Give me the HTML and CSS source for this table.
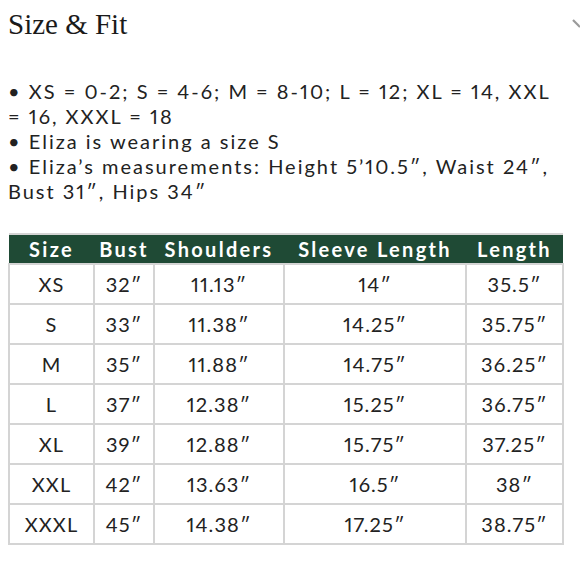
FILE: index.html
```html
<!DOCTYPE html>
<html>
<head>
<meta charset="utf-8">
<link rel="stylesheet" href="styles.css">
</head>
<body>
<div class="page">
  <div class="top">
    <h1 class="title">Size &amp; Fit</h1>
    <svg class="chev" width="8" height="10" viewBox="0 0 8 10"><path d="M1 1 L8 8" stroke="#9a9a9a" stroke-width="2.2" fill="none"/></svg>
  </div>
  <div class="notes">
    <p>• XS = 0-2; S = 4-6; M = 8-10; L = 12; XL = 14, XXL = 16, XXXL = 18</p>
    <p>• Eliza is wearing a size S</p>
    <p>• Eliza’s measurements: Height 5’10.5″, Waist 24″, Bust 31″, Hips 34″</p>
  </div>
  <table class="chart">
    <colgroup>
      <col class="c1"><col class="c2"><col class="c3"><col class="c4"><col class="c5">
    </colgroup>
    <thead>
      <tr><th>Size</th><th>Bust</th><th>Shoulders</th><th>Sleeve Length</th><th>Length</th></tr>
    </thead>
    <tbody>
      <tr><td>XS</td><td>32″</td><td>11.13″</td><td>14″</td><td>35.5″</td></tr>
      <tr><td>S</td><td>33″</td><td>11.38″</td><td>14.25″</td><td>35.75″</td></tr>
      <tr><td>M</td><td>35″</td><td>11.88″</td><td>14.75″</td><td>36.25″</td></tr>
      <tr><td>L</td><td>37″</td><td>12.38″</td><td>15.25″</td><td>36.75″</td></tr>
      <tr><td>XL</td><td>39″</td><td>12.88″</td><td>15.75″</td><td>37.25″</td></tr>
      <tr><td>XXL</td><td>42″</td><td>13.63″</td><td>16.5″</td><td>38″</td></tr>
      <tr><td>XXXL</td><td>45″</td><td>14.38″</td><td>17.25″</td><td>38.75″</td></tr>
    </tbody>
  </table>
</div>
</body>
</html>
```
FILE: styles.css
```css
html, body {
  margin: 0;
  padding: 0;
  background: #fff;
}
.page {
  padding: 0 0 0 8px;
  width: 572px;
  box-sizing: border-box;
  font-family: "Lato", "Liberation Sans", sans-serif;
  font-variant-numeric: proportional-nums;
  color: #1c1c1c;
}
.top {
  display: flex;
  justify-content: space-between;
  align-items: flex-start;
  height: 79px;
}
.title {
  margin: 0;
  padding-top: 8px;
  font-family: "Liberation Serif", serif;
  font-weight: normal;
  font-size: 29px;
  line-height: 33px;
  color: #1a1a1a;
}
.chev {
  margin-top: 19px;
  margin-right: -8px;
}
.notes {
  width: 552px;
  font-size: 20px;
  line-height: 25px;
  letter-spacing: 2px;
  color: #222;
}
.notes p {
  margin: 0;
}
.chart {
  margin-top: 29px;
  border-collapse: collapse;
  table-layout: fixed;
  width: 554px;
  font-size: 20px;
  letter-spacing: 1.1px;
}
.c1 { width: 85px; }
.c2 { width: 60px; }
.c3 { width: 130px; }
.c4 { width: 182px; }
.c5 { width: 97px; }
.chart th {
  background: #1f4a35;
  color: #fff;
  font-weight: bold;
  height: 28px;
  padding: 0;
  letter-spacing: 2.3px;
  border: 2px solid #d4d4d4;
  border-bottom: none;
  border-left: none;
  border-right: none;
  white-space: nowrap;
}
.chart td {
  height: 38px;
  padding: 0;
  text-align: center;
  border: 2px solid #d4d4d4;
  color: #222;
}
```
